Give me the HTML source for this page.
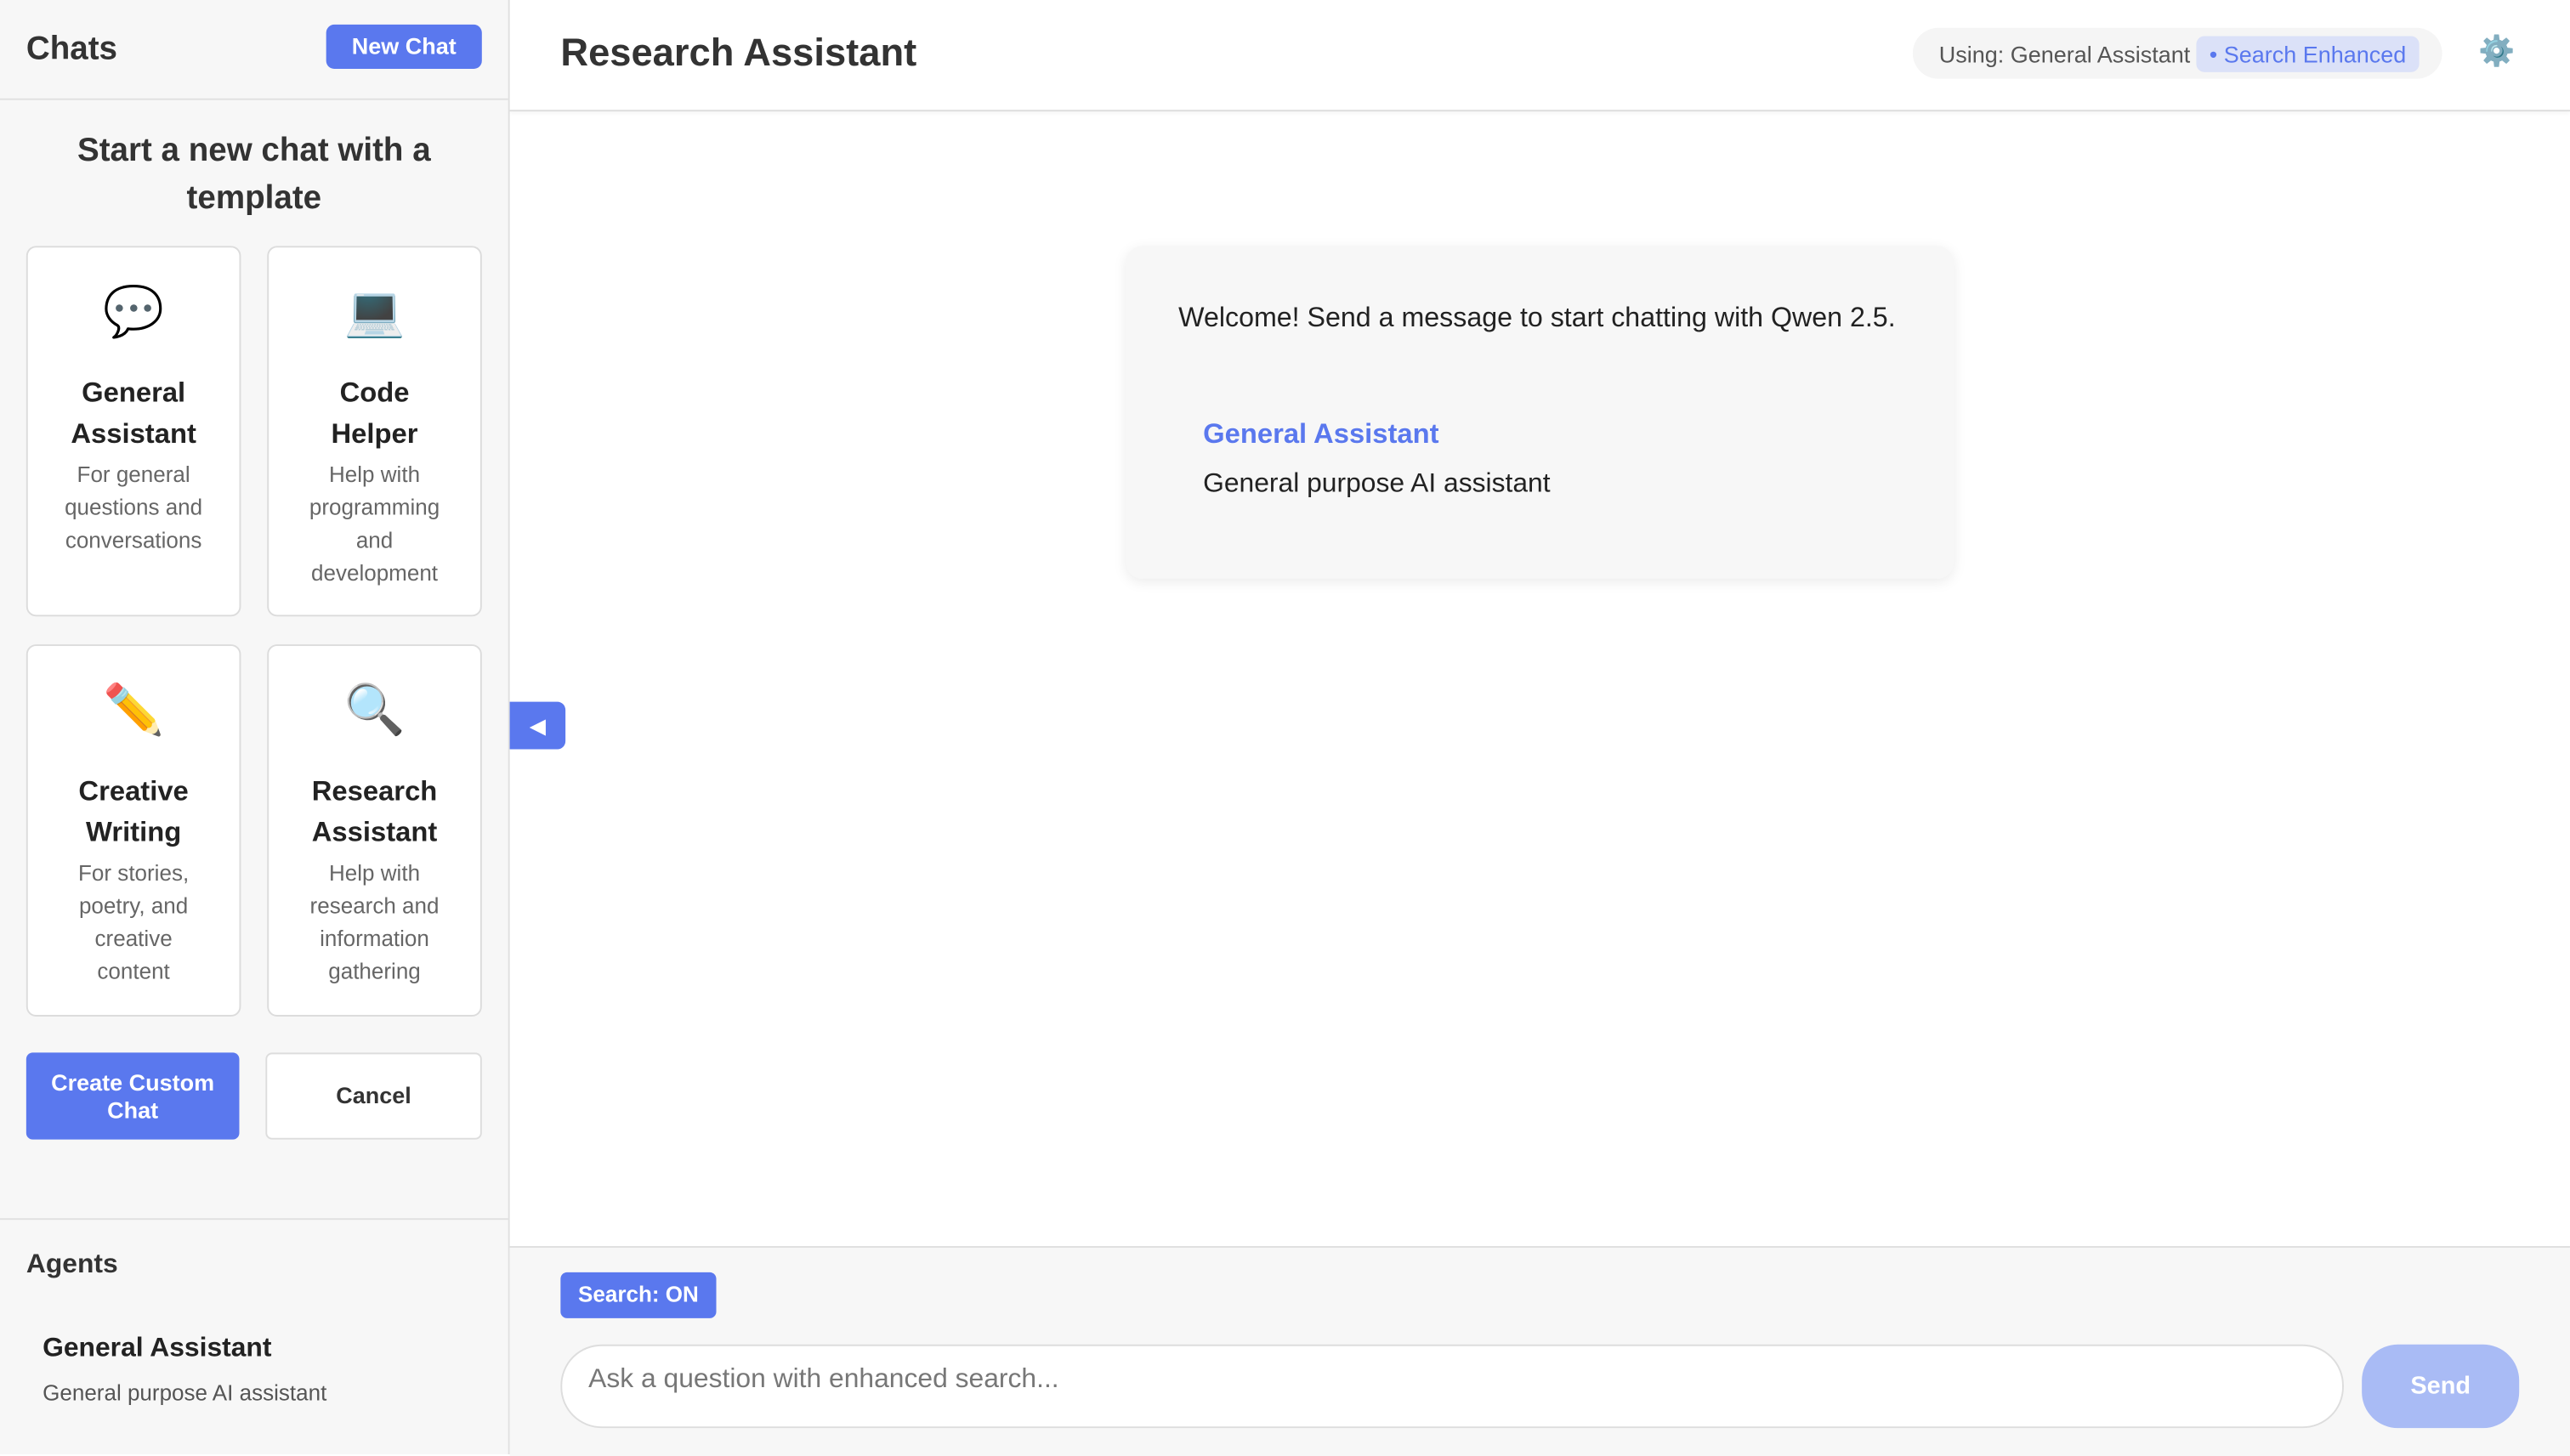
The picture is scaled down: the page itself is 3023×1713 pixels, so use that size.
<!DOCTYPE html>
<html><head><meta charset="utf-8"><style>
html,body{margin:0;padding:0;width:3023px;height:1711px;overflow:hidden;background:#fff}
#w{position:absolute;left:0;top:0;width:1568px;height:887px;transform:scale(1.92793,1.929);transform-origin:0 0;font-family:"Liberation Sans",sans-serif;color:#222}
.a{position:absolute}
.card{position:absolute;background:#fff;border:1px solid #dcdcdc;border-radius:6px;text-align:center;box-sizing:border-box}
.card .e{font-size:30px;line-height:40px;margin-top:20px}
.card .t{font-weight:bold;font-size:17px;line-height:25px;margin-top:16px;padding:0 22px}
.card .d{font-size:13.5px;line-height:20px;color:#666;margin-top:3px;padding:0 18px}
</style></head><body><div id="w">
<div class="a" style="left:0;top:0;width:310px;height:887px;background:#f7f7f7;border-right:1px solid #e0e0e0"></div>
<div class="a" style="left:0;top:60px;width:310px;height:1px;background:#e0e0e0"></div>
<div class="a" style="left:16px;top:19px;font-size:20px;font-weight:bold;color:#333">Chats</div>
<div class="a" style="left:199px;top:15px;width:95px;height:27px;background:#5a78ee;border-radius:5px;color:#fff;font-weight:bold;font-size:14px;line-height:27px;text-align:center">New Chat</div>
<div class="a" style="left:0;top:78px;width:310px;text-align:center;font-size:20px;font-weight:bold;line-height:29px;color:#333">Start a new chat with a<br>template</div>
<div class="card" style="left:16px;top:150px;width:131px;height:226px"><div class="e">💬</div><div class="t">General Assistant</div><div class="d">For general questions and conversations</div></div>
<div class="card" style="left:163px;top:150px;width:131px;height:226px"><div class="e">💻</div><div class="t">Code Helper</div><div class="d">Help with programming and development</div></div>
<div class="card" style="left:16px;top:393px;width:131px;height:227px"><div class="e">✏️</div><div class="t">Creative Writing</div><div class="d">For stories, poetry, and creative content</div></div>
<div class="card" style="left:163px;top:393px;width:131px;height:227px"><div class="e">🔍</div><div class="t">Research Assistant</div><div class="d">Help with research and information gathering</div></div>
<div class="a" style="left:16px;top:642px;width:130px;height:53px;background:#5a78ee;border-radius:4px;color:#fff;font-weight:bold;font-size:14px;line-height:17px;text-align:center;display:flex;align-items:center;justify-content:center">Create Custom<br>Chat</div>
<div class="a" style="left:162px;top:642px;width:132px;height:53px;background:#fff;border:1px solid #ddd;box-sizing:border-box;border-radius:4px;font-weight:bold;font-size:14px;line-height:51px;text-align:center;color:#333">Cancel</div>
<div class="a" style="left:0;top:743px;width:310px;height:1px;background:#e0e0e0"></div>
<div class="a" style="left:16px;top:762px;font-size:16.5px;font-weight:bold;color:#333">Agents</div>
<div class="a" style="left:26px;top:813px;font-size:16.5px;font-weight:bold;color:#222">General Assistant</div>
<div class="a" style="left:26px;top:842px;font-size:13.5px;color:#555">General purpose AI assistant</div>

<div class="a" style="left:311px;top:67px;width:1257px;height:1px;background:#ddd;box-shadow:0 1px 2px rgba(0,0,0,.06)"></div>
<div class="a" style="left:342px;top:19px;font-size:23.5px;font-weight:bold;color:#333">Research Assistant</div>
<div class="a" style="left:1167px;top:17px;width:323px;height:31px;background:#f5f5f5;border-radius:16px"></div>
<div class="a" style="left:1183px;top:25px;font-size:14px;color:#555">Using: General Assistant</div>
<div class="a" style="left:1340px;top:22px;width:136px;height:22px;background:#dbe1f8;border-radius:5px;color:#5a78ee;font-size:14px;line-height:22px;text-align:center">• Search Enhanced</div>
<div class="a" style="left:1512px;top:21px;font-size:18px;color:#777">⚙️</div>

<div class="a" style="left:311px;top:428px;width:34px;height:29px;background:#5a78ee;border-radius:0 5px 5px 0;color:#fff;font-size:13px;line-height:29px;text-align:center">◀</div>

<div class="a" style="left:687px;top:150px;width:505px;height:203px;background:#f7f7f7;border-radius:10px;box-shadow:0 2px 8px rgba(0,0,0,.08)"></div>
<div class="a" style="left:719px;top:184px;font-size:16.7px;color:#222">Welcome! Send a message to start chatting with Qwen 2.5.</div>
<div class="a" style="left:734px;top:255px;font-size:17px;font-weight:bold;color:#5a78ee">General Assistant</div>
<div class="a" style="left:734px;top:286px;font-size:16.5px;color:#222">General purpose AI assistant</div>

<div class="a" style="left:311px;top:760px;width:1257px;height:127px;background:#f7f7f7;border-top:1px solid #e0e0e0"></div>
<div class="a" style="left:342px;top:776px;width:95px;height:28px;background:#5a78ee;border-radius:4px;color:#fff;font-weight:bold;font-size:13.5px;line-height:28px;text-align:center">Search: ON</div>
<div class="a" style="left:342px;top:820px;width:1088px;height:51px;background:#fff;border:1px solid #ddd;box-sizing:border-box;border-radius:25px"></div>
<div class="a" style="left:359px;top:832px;font-size:16.5px;color:#777">Ask a question with enhanced search...</div>
<div class="a" style="left:1441px;top:820px;width:96px;height:51px;background:#a9bbf5;border-radius:22px;color:#fff;font-weight:bold;font-size:15px;line-height:51px;text-align:center">Send</div>
</div></body></html>
